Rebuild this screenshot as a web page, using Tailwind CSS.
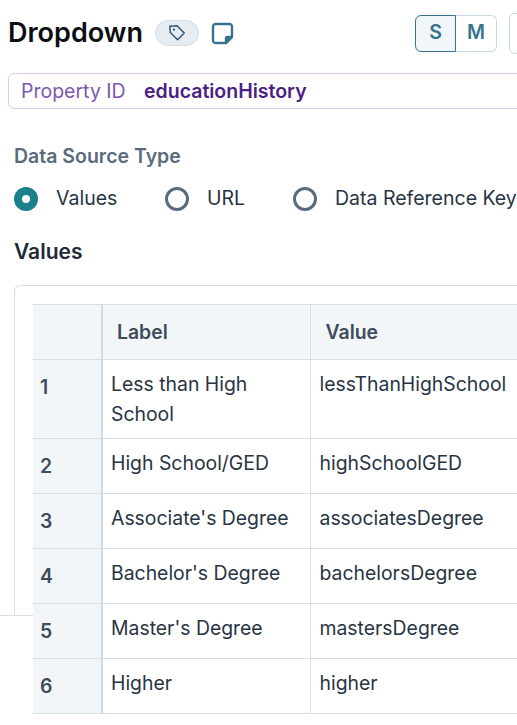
<!DOCTYPE html>
<html lang="en">
<head>
  <meta charset="UTF-8">
  <meta name="viewport" content="width=device-width, initial-scale=1.0">
  <title>Dropdown</title>
  <script src="https://cdn.jsdelivr.net/npm/@tailwindcss/browser@4"></script>
</head>
<body class="bg-white font-['Inter',sans-serif] w-[517px] h-[725px] overflow-hidden">
  <!-- header -->
  <div class="flex items-center h-[73px] pl-2 w-[560px] pb-[7px]">
    <h1 class="text-[27px] font-semibold text-[#0b0f14] w-[147px]">Dropdown</h1>
    <span class="flex items-center justify-center w-[44px] h-[26px] rounded-full bg-[#e6edf2] border border-[#d5dfe6]">
      <svg class="w-[20px] h-[20px] text-[#33536e]" viewBox="0 0 18 18" fill="none" stroke="currentColor" stroke-width="1.3" stroke-linejoin="round"><path d="M2.500 3 3 8.500 9.500 15 15.500 9 9 2.500z"/><circle cx="6.300" cy="6" r="1" fill="currentColor" stroke="none"/></svg>
    </span>
    <svg class="w-[23px] h-[23px] ml-[12px] text-[#37738c]" viewBox="0 0 23 23" fill="none" stroke="currentColor" stroke-width="2.400" stroke-linejoin="round"><path d="M15 21H4.500A2.500 2.500 0 0 1 2 18.500V4.500A2.500 2.500 0 0 1 4.500 2h14A2.500 2.500 0 0 1 21 4.500V15z"/><path d="M15 21v-4.500a1.500 1.500 0 0 1 1.500-1.500H21z" fill="currentColor"/></svg>
    <div class="flex ml-[181px] h-[37px]">
      <button class="w-[41px] h-full rounded-l-md border border-[#37738c] bg-[#f0f6f9] text-[#37738c] text-[19.5px] font-semibold">S</button>
      <button class="w-[41px] h-full rounded-r-md border border-l-0 border-[#c6d9e2] text-[#37738c] text-[19.5px] font-semibold">M</button>
    </div>
    <div class="ml-3 w-[40px] h-[41px] rounded-md border border-[#c6d9e2]"></div>
  </div>

  <!-- property id -->
  <div class="flex items-center ml-2 w-[560px] h-[36px] rounded-md border border-[#e2c9ec] pl-3 pt-px text-[19.5px]">
    <span class="text-[#7e57b0] w-[123px]">Property ID</span>
    <span class="font-semibold text-[#4a2183]">educationHistory</span>
  </div>

  <!-- data source -->
  <div class="pl-[14px]">
    <h2 class="mt-[35px] text-[19.5px] font-semibold text-[#5b6b7b] leading-[24px]">Data Source Type</h2>
    <div class="flex items-center mt-[18px] h-[26px] text-[19.5px] text-[#273444] whitespace-nowrap">
      <span class="flex items-center justify-center w-6 h-6 rounded-full bg-[#1b808b]"><span class="w-2 h-2 rounded-full bg-white"></span></span>
      <span class="ml-[18px] w-[109px]">Values</span>
      <span class="w-6 h-6 rounded-full border-[3px] border-[#5b6b7b]"></span>
      <span class="ml-[18px] w-[86px]">URL</span>
      <span class="w-6 h-6 rounded-full border-[3px] border-[#5b6b7b]"></span>
      <span class="ml-[18px]">Data Reference Key</span>
    </div>
    <h2 class="mt-[27px] text-[21px] font-semibold text-[#1f2937] leading-[26px]">Values</h2>
  </div>

  <!-- values card, the table runs past its lower edge -->
  <div class="relative">
    <div class="absolute left-0 top-[330px] w-[33px] border-t border-[#d5dfe6]"></div>
    <div class="mt-[20px] ml-[14px] w-[560px] h-[330px] rounded-t-md border-t border-l border-[#d5dfe6] pl-[18px] pt-[18px]">
      <table class="relative bg-white table-fixed border-collapse w-[520px] text-[19.4px] text-[#273444] border-t border-[#d5dfe6]">
        <colgroup><col class="w-[69px]"><col class="w-[208px]"><col></colgroup>
        <thead>
          <tr class="h-[55px] bg-[#f3f6f8] text-[#3e4c5c] font-semibold text-left border-b border-[#d5dfe6]">
            <th class="border-r-2 border-[#cfdbe4]"></th>
            <th class="pl-[14px] pt-px font-semibold border-r border-[#d5dfe6]">Label</th>
            <th class="pl-[15px] pt-px font-semibold">Value</th>
          </tr>
        </thead>
        <tbody>
          <tr class="h-[79px] border-b border-[#d5dfe6] align-top">
            <td class="bg-[#f3f6f8] border-r-2 border-[#cfdbe4] pl-[7px] pt-[13px] font-semibold text-[#3e4c5c]">1</td>
            <td class="pl-2 pt-[9px] pr-2 leading-[30px] border-r border-[#d5dfe6]">Less than High School</td>
            <td class="pl-[9px] pt-[9px] leading-[30px]">lessThanHighSchool</td>
          </tr>
          <tr class="h-[55px] border-b border-[#d5dfe6] align-top">
            <td class="bg-[#f3f6f8] border-r-2 border-[#cfdbe4] pl-[7px] pt-[13px] font-semibold text-[#3e4c5c]">2</td>
            <td class="pl-2 pt-[9px] leading-[30px] border-r border-[#d5dfe6]">High School/GED</td>
            <td class="pl-[9px] pt-[9px] leading-[30px]">highSchoolGED</td>
          </tr>
          <tr class="h-[55px] border-b border-[#d5dfe6] align-top">
            <td class="bg-[#f3f6f8] border-r-2 border-[#cfdbe4] pl-[7px] pt-[13px] font-semibold text-[#3e4c5c]">3</td>
            <td class="pl-2 pt-[9px] leading-[30px] border-r border-[#d5dfe6]">Associate's Degree</td>
            <td class="pl-[9px] pt-[9px] leading-[30px]">associatesDegree</td>
          </tr>
          <tr class="h-[55px] border-b border-[#d5dfe6] align-top">
            <td class="bg-[#f3f6f8] border-r-2 border-[#cfdbe4] pl-[7px] pt-[13px] font-semibold text-[#3e4c5c]">4</td>
            <td class="pl-2 pt-[9px] leading-[30px] border-r border-[#d5dfe6]">Bachelor's Degree</td>
            <td class="pl-[9px] pt-[9px] leading-[30px]">bachelorsDegree</td>
          </tr>
          <tr class="h-[55px] border-b border-[#d5dfe6] align-top">
            <td class="bg-[#f3f6f8] border-r-2 border-[#cfdbe4] pl-[7px] pt-[13px] font-semibold text-[#3e4c5c]">5</td>
            <td class="pl-2 pt-[9px] leading-[30px] border-r border-[#d5dfe6]">Master's Degree</td>
            <td class="pl-[9px] pt-[9px] leading-[30px]">mastersDegree</td>
          </tr>
          <tr class="h-[55px] border-b border-[#d5dfe6] align-top">
            <td class="bg-[#f3f6f8] border-r-2 border-[#cfdbe4] pl-[7px] pt-[13px] font-semibold text-[#3e4c5c]">6</td>
            <td class="pl-2 pt-[9px] leading-[30px] border-r border-[#d5dfe6]">Higher</td>
            <td class="pl-[9px] pt-[9px] leading-[30px]">higher</td>
          </tr>
        </tbody>
      </table>
    </div>
  </div>
</body>
</html>
